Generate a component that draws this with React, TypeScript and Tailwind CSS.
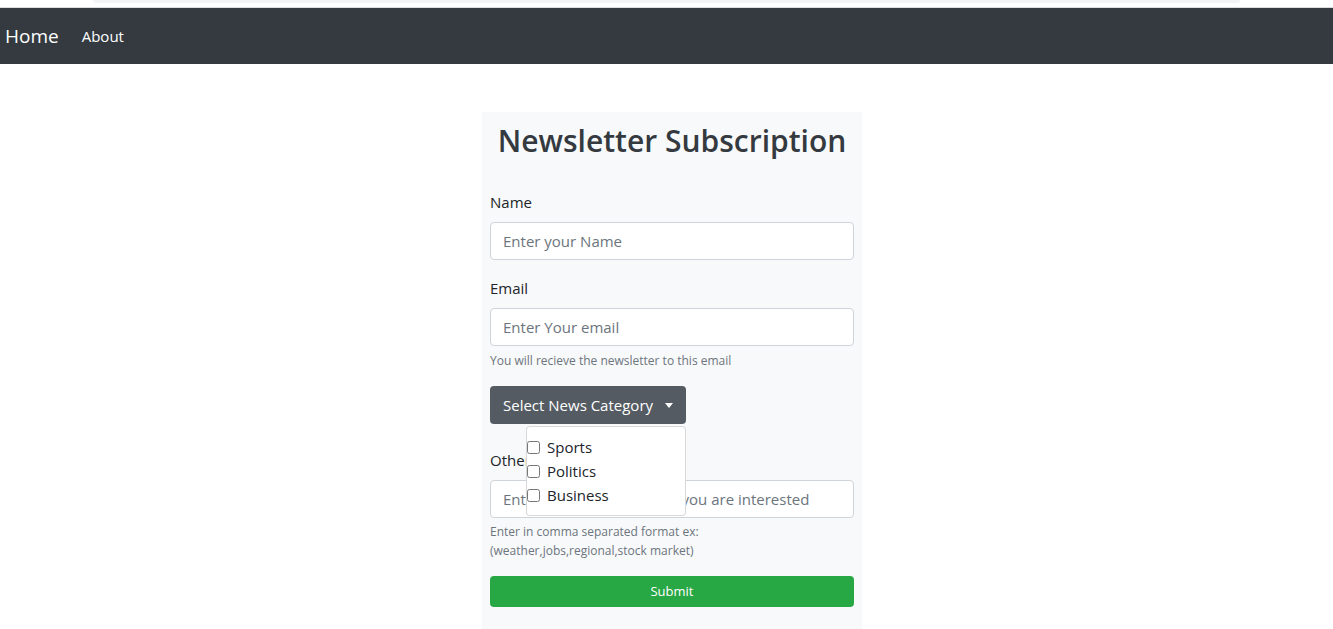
import { useState } from 'react';

const categories = ['Sports', 'Politics', 'Business'];

export default function App() {
  const [checked, setChecked] = useState<string[]>([]);

  const toggle = (name: string) => {
    setChecked((prev) =>
      prev.includes(name) ? prev.filter((c) => c !== name) : [...prev, name]
    );
  };

  return (
    <div className="min-h-screen bg-white font-['Open_Sans',sans-serif] text-[#212529]">
      {/* browser strip */}
      <div className="h-[8px] border-b border-[#dadce0] bg-white">
        <div className="mx-[93px] h-[3px] rounded-b-md bg-[#f1f3f4]" />
      </div>

      <nav className="flex h-[56px] items-center bg-[#343a40] pl-[5px]">
        <a className="text-[19px] text-white">Home</a>
        <a className="ml-[23px] text-[15px] text-white">About</a>
      </nav>

      <div className="flex justify-center pl-[11px] pt-[48px]">
        <div className="w-[380px] bg-[#f8f9fa] px-[8px] pt-[10px] pb-[40px]">
          <h1 className="h-[38px] text-center text-[30px] leading-[38px] font-semibold text-[#343a40]">
            Newsletter Subscription
          </h1>

          <form className="mt-[30px]" onSubmit={(e) => e.preventDefault()}>
            <label className="block h-[24px] text-[15px] leading-[24px]">Name</label>
            <input
              className="mt-[8px] block h-[38px] w-full rounded-[4px] border border-[#ced4da] bg-white px-[12px] text-[15px] placeholder:text-[#6c757d]"
              placeholder="Enter your Name"
            />

            <label className="mt-[16px] block h-[24px] text-[15px] leading-[24px]">Email</label>
            <input
              className="mt-[8px] block h-[38px] w-full rounded-[4px] border border-[#ced4da] bg-white px-[12px] text-[15px] placeholder:text-[#6c757d]"
              placeholder="Enter Your email"
            />
            <p className="mt-[5px] h-[19px] text-[12px] leading-[19px] text-[#6c757d]">
              You will recieve the newsletter to this email
            </p>

            <div className="relative mt-[16px]">
              <button
                type="button"
                className="flex h-[38px] w-[196px] items-center rounded-[4px] bg-[#545b62] pl-[13px] text-[15px] text-white"
              >
                Select News Category
                <span className="ml-[12px] inline-block h-0 w-0 border-x-[4px] border-t-[5px] border-x-transparent border-t-white" />
              </button>
              <div className="absolute left-[36px] top-[40px] z-10 h-[90px] w-[160px] rounded-[4px] border border-black/15 bg-white pt-[8px]">
                {categories.map((c) => (
                  <label key={c} className="flex h-[24px] items-center text-[15px] leading-[24px]">
                    <input
                      type="checkbox"
                      className="h-[13px] w-[13px]"
                      checked={checked.includes(c)}
                      onChange={() => toggle(c)}
                    />
                    <span className="ml-[7px]">{c}</span>
                  </label>
                ))}
              </div>
            </div>

            <label className="mt-[24px] block h-[24px] text-[15px] leading-[24px]">Other Categories</label>
            <input
              className="mt-[8px] block h-[38px] w-full rounded-[4px] border border-[#ced4da] bg-white px-[12px] text-[15px] placeholder:text-[#6c757d]"
              placeholder="Enter any other Category you are interested"
            />
            <p className="mt-[4px] w-[230px] text-[12px] leading-[19px] text-[#6c757d]">
              Enter in comma separated format ex: (weather,jobs,regional,stock market)
            </p>

            <button
              type="submit"
              className="mt-[16px] block h-[31px] w-full rounded-[4px] bg-[#28a745] text-[13px] text-white"
            >
              Submit
            </button>
          </form>
        </div>
      </div>
    </div>
  );
}
